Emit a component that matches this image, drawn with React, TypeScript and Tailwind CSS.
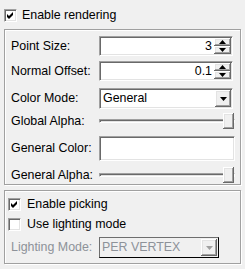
import React from "react";

const sunken =
  "border border-t-[#a0a0a0] border-l-[#a0a0a0] border-r-white border-b-white shadow-[inset_1px_1px_0_#696969,inset_-1px_-1px_0_#e3e3e3]";
const raised =
  "bg-[#f0f0f0] shadow-[inset_-1px_-1px_0_#696969,inset_1px_1px_0_#ffffff,inset_-2px_-2px_0_#a0a0a0,inset_2px_2px_0_#e3e3e3]";

function Check({ checked }: { checked: boolean }) {
  return (
    <div className={`w-[13px] h-[13px] bg-white ${sunken} flex items-center justify-center shrink-0`}>
      {checked && (
        <svg width="7" height="7" viewBox="0 0 7 7">
          <path d="M0 2 L2 4 L6 0 L6 3 L2 7 L0 5 Z" fill="#000" />
        </svg>
      )}
    </div>
  );
}

function Arrow({ dir, color = "#000" }: { dir: "up" | "down"; color?: string }) {
  return (
    <svg width="7" height="4" viewBox="0 0 7 4">
      {dir === "up" ? (
        <path d="M3.5 0 L7 4 L0 4 Z" fill={color} />
      ) : (
        <path d="M0 0 L7 0 L3.5 4 Z" fill={color} />
      )}
    </svg>
  );
}

function Spin({ value }: { value: string }) {
  return (
    <div className={`w-[134px] h-[20px] bg-white ${sunken} flex items-center`}>
      <div className="flex-1 text-right pr-[2px] leading-none">{value}</div>
      <div className="flex flex-col w-[17px] h-[16px] mr-[1px]">
        <div className={`h-[8px] ${raised} flex items-center justify-center`}>
          <Arrow dir="up" />
        </div>
        <div className={`h-[8px] ${raised} flex items-center justify-center`}>
          <Arrow dir="down" />
        </div>
      </div>
    </div>
  );
}

function Slider() {
  return (
    <div className="w-[136px] h-[16px] relative flex items-center">
      <div className="w-full h-[4px] border-t border-l border-t-[#a0a0a0] border-l-[#a0a0a0] border-b border-r border-b-white border-r-white shadow-[inset_1px_1px_0_#696969,inset_-1px_-1px_0_#e3e3e3]" />
      <div className={`absolute right-[1px] top-0 w-[11px] h-[16px] ${raised}`} />
    </div>
  );
}

export default function App() {
  return (
    <div
      className="w-[245px] h-[269px] bg-[#f0f0f0] text-black text-[12.4px] pt-[9px] px-[4px]"
      style={{ fontFamily: '"Liberation Sans", Arial, sans-serif' }}
    >
      <div className="flex items-center h-[13px]">
        <Check checked />
        <span className="ml-[5px] leading-none">Enable rendering</span>
      </div>

      <div className="mt-[7px] h-[156px] border border-[#a0a0a0] shadow-[1px_1px_0_#fff,inset_1px_1px_0_#fff] pl-[6px] flex flex-col">
        <div className="mt-[6px] flex items-center">
          <span className="w-[88px]">Point Size:</span>
          <Spin value="3" />
        </div>
        <div className="mt-[5px] flex items-center">
          <span className="w-[88px]">Normal Offset:</span>
          <Spin value="0.1" />
        </div>
        <div className="mt-[7px] flex items-center">
          <span className="w-[88px]">Color Mode:</span>
          <div className={`w-[134px] h-[21px] bg-white ${sunken} flex items-center`}>
            <span className="flex-1 pl-[3px] leading-none">General</span>
            <div className={`w-[16px] h-[17px] mr-[1px] ${raised} flex items-center justify-center`}>
              <Arrow dir="down" />
            </div>
          </div>
        </div>
        <div className="mt-[3px] flex items-center">
          <span className="w-[88px]">Global Alpha:</span>
          <Slider />
        </div>
        <div className="mt-[5px] flex items-center">
          <span className="w-[88px]">General Color:</span>
          <div className={`w-[136px] h-[25px] bg-white ${sunken}`} />
        </div>
        <div className="mt-[5px] flex items-center">
          <span className="w-[88px]">General Alpha:</span>
          <Slider />
        </div>
      </div>

      <div className="mt-[5px] h-[74px] border border-[#a0a0a0] shadow-[1px_1px_0_#fff,inset_1px_1px_0_#fff] pl-[3px] flex flex-col">
        <div className="mt-[7px] flex items-center h-[13px]">
          <Check checked />
          <span className="ml-[6px] leading-none">Enable picking</span>
        </div>
        <div className="mt-[7px] flex items-center h-[13px]">
          <Check checked={false} />
          <span className="ml-[6px] leading-none">Use lighting mode</span>
        </div>
        <div className="mt-[6px] flex items-center pl-[3px]">
          <span className="w-[88px] text-[#8d9299]">Lighting Mode:</span>
          <div className="w-[120px] h-[21px] border border-[#6d6d6d] border-r-black border-b-black bg-[#f0f0f0] flex items-center">
            <span className="flex-1 pl-[2px] leading-none text-[#8d9299]">PER VERTEX</span>
            <div className={`w-[16px] h-[17px] mr-[1px] ${raised} flex items-center justify-center`}>
              <Arrow dir="down" color="#a0a0a0" />
            </div>
          </div>
        </div>
      </div>
    </div>
  );
}
